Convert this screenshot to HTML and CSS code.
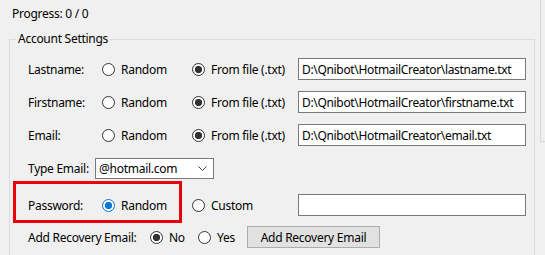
FILE: index.html
```html
<!DOCTYPE html>
<html>
<head>
<meta charset="utf-8">
<link rel="stylesheet" href="styles.css">
</head>
<body>
<div class="main">
  <div class="progress">Progress: 0 / 0</div>
  <fieldset class="group">
    <legend class="group-title">Account Settings</legend>
    <div class="row">
      <span class="label">Lastname:</span>
      <label class="opt opt1"><input type="radio" class="rb" name="ln"><span>Random</span></label>
      <label class="opt opt2"><input type="radio" class="rb" name="ln" checked><span>From file (.txt)</span></label>
      <input class="field" type="text" value="D:\Qnibot\HotmailCreator\lastname.txt">
    </div>
    <div class="row">
      <span class="label">Firstname:</span>
      <label class="opt opt1"><input type="radio" class="rb" name="fn"><span>Random</span></label>
      <label class="opt opt2"><input type="radio" class="rb" name="fn" checked><span>From file (.txt)</span></label>
      <input class="field" type="text" value="D:\Qnibot\HotmailCreator\firstname.txt">
    </div>
    <div class="row">
      <span class="label">Email:</span>
      <label class="opt opt1"><input type="radio" class="rb" name="em"><span>Random</span></label>
      <label class="opt opt2"><input type="radio" class="rb" name="em" checked><span>From file (.txt)</span></label>
      <input class="field" type="text" value="D:\Qnibot\HotmailCreator\email.txt">
    </div>
    <div class="row">
      <span class="label label-type">Type Email:</span>
      <div class="combo">
        <span class="combo-text">@hotmail.com</span>
        <svg class="chev" width="9" height="5" viewBox="0 0 9 5"><path d="M0.5 0.5 L4.5 4.5 L8.5 0.5" fill="none" stroke="#444" stroke-width="1"/></svg>
      </div>
    </div>
    <div class="row row-pass">
      <div class="highlight"></div>
      <span class="label">Password:</span>
      <label class="opt opt1"><input type="radio" class="rb blue" name="pw" checked><span>Random</span></label>
      <label class="opt opt2"><input type="radio" class="rb" name="pw"><span>Custom</span></label>
      <input class="field" type="text" value="">
    </div>
    <div class="row row-rec">
      <span class="label label-rec">Add Recovery Email:</span>
      <label class="opt opt-no"><input type="radio" class="rb" name="re" checked><span>No</span></label>
      <label class="opt opt-yes"><input type="radio" class="rb" name="re"><span>Yes</span></label>
      <button class="btn" type="button">Add Recovery Email</button>
    </div>
  </fieldset>
</div>
<div class="side"></div>
</body>
</html>
```

FILE: styles.css
```css
html, body {
  margin: 0;
  padding: 0;
}
body {
  background: #f0f0f0;
  font-family: "Noto Sans", "Open Sans", sans-serif;
  font-size: 12px;
  letter-spacing: -0.27px;
  color: #000;
  display: flex;
  align-items: flex-start;
  height: 255px;
  overflow: hidden;
}
.main {
  width: 540px;
  flex: none;
}
.side {
  flex: 1;
  height: 141px;
  border-left: 1px solid #d9d9d9;
  border-bottom: 1px solid #d9d9d9;
}
.progress {
  padding: 6px 0 0 12px;
  line-height: 16px;
  height: 16px;
}
.group {
  margin: 9px 0 0 9px;
  padding: 0;
  width: 526px;
  height: 232px;
  box-sizing: border-box;
  border: 1px solid #dcdcdc;
  min-width: 0;
}
.group-title {
  margin-left: 6px;
  padding: 0 2px;
  line-height: 16px;
}
.row {
  display: flex;
  align-items: center;
  height: 22px;
  padding-left: 18px;
  margin-top: 11px;
  position: relative;
}
.row-pass {
  margin-top: 15px;
}
.row-rec {
  margin-top: 10px;
}
.label {
  width: 74px;
  flex: none;
}
.label-type {
  width: 67px;
}
.label-rec {
  width: 122px;
}
.opt {
  display: flex;
  align-items: center;
  flex: none;
}
.opt span {
  margin-left: 6px;
}
.opt1 {
  width: 90px;
}
.opt2 {
  width: 106px;
}
.opt-no {
  width: 48px;
}
.opt-yes {
  width: 49px;
}
.rb {
  -webkit-appearance: none;
  appearance: none;
  margin: 0;
  width: 13px;
  height: 13px;
  box-sizing: border-box;
  border: 1px solid #333;
  border-radius: 50%;
  background: #fff;
  flex: none;
}
.rb:checked {
  background: radial-gradient(circle, #333 0 3.4px, #fff 3.9px);
}
.rb.blue {
  border-color: #0078d7;
}
.rb.blue:checked {
  background: radial-gradient(circle, #0078d7 0 3.4px, #fff 3.9px);
}
.field {
  width: 228px;
  height: 22px;
  box-sizing: border-box;
  border: 1px solid #7a7a7a;
  background: #fff;
  margin: 0;
  padding: 0 3px;
  font: inherit;
  letter-spacing: -0.33px;
  color: #000;
  outline: none;
}
.combo {
  width: 119px;
  height: 21px;
  box-sizing: border-box;
  border: 1px solid #7a7a7a;
  background: #fff;
  display: flex;
  align-items: center;
  justify-content: space-between;
  padding: 0 6px 0 3px;
}
.chev {
  display: block;
}
.highlight {
  position: absolute;
  left: 3px;
  top: -13px;
  width: 169px;
  height: 42px;
  box-sizing: border-box;
  border: 3px solid #e8000b;
  pointer-events: none;
}
.btn {
  width: 133px;
  height: 22px;
  box-sizing: border-box;
  border: 1px solid #adadad;
  background: #e1e1e1;
  font: inherit;
  letter-spacing: -0.27px;
  color: #000;
  padding: 0;
  margin: 0;
}
```
